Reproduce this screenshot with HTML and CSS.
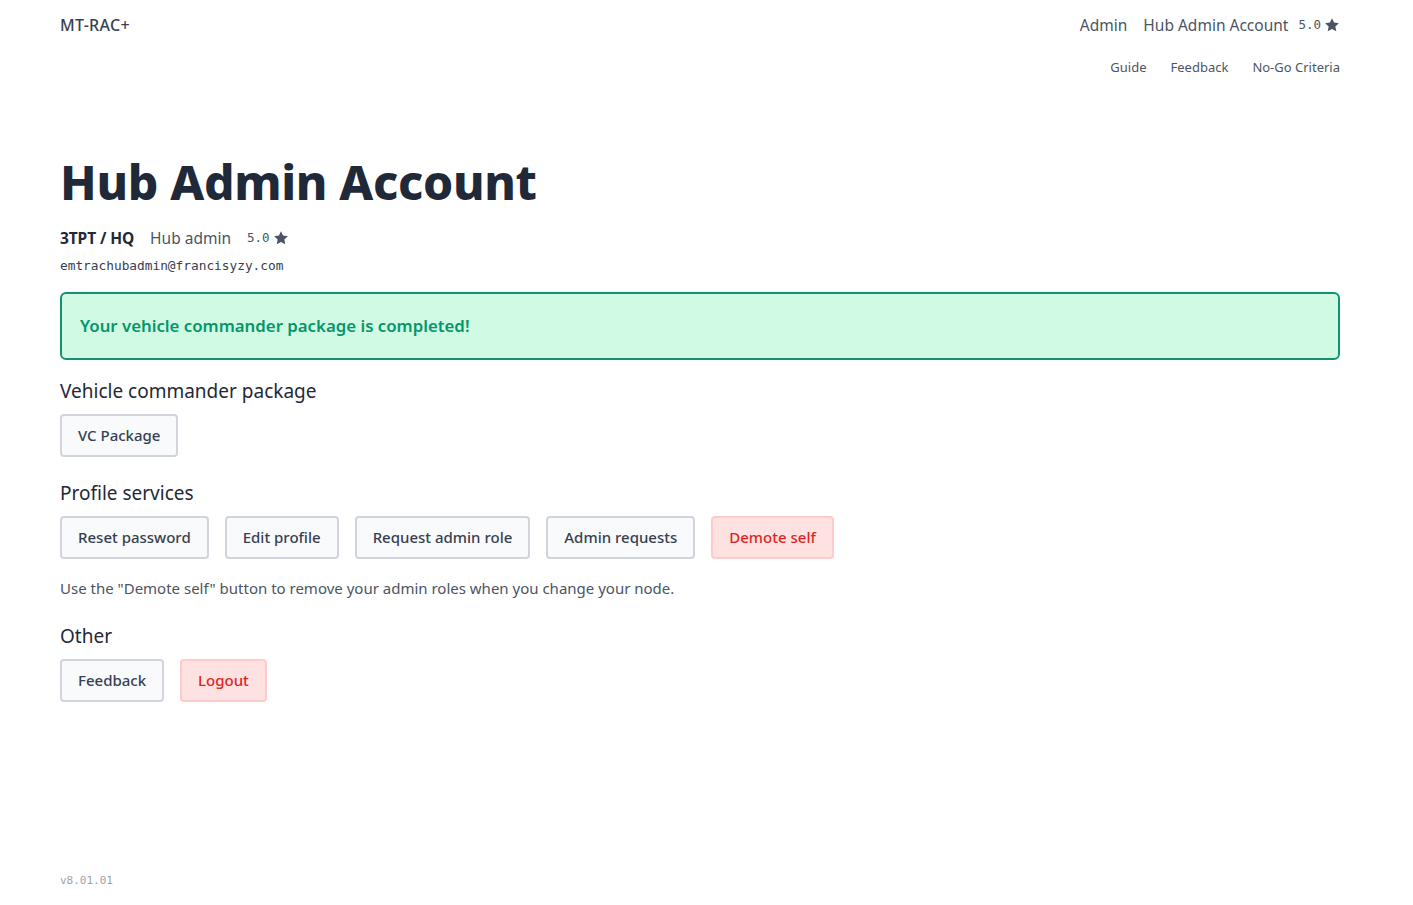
FILE: index.html
```html
<!DOCTYPE html>
<html lang="en">
<head>
<meta charset="utf-8">
<title>Hub Admin Account</title>
<link rel="stylesheet" href="styles.css">
</head>
<body>
<div class="page">
  <header class="topbar">
    <div class="brand">MT-RAC+</div>
    <div class="nav">
      <div class="nav-main">
        <span class="nav-link">Admin</span>
        <span class="nav-link">Hub Admin Account</span>
        <span class="rating"><span class="mono">5.0</span><svg class="star" viewBox="0 0 24 24"><path d="M12 1.8l3.1 6.6 7.2.9-5.3 5 1.4 7.1L12 17.9l-6.4 3.5 1.4-7.1-5.3-5 7.2-.9z"/></svg></span>
      </div>
      <div class="nav-sub">
        <span>Guide</span>
        <span>Feedback</span>
        <span>No-Go Criteria</span>
      </div>
    </div>
  </header>

  <main class="content">
    <h1 class="title">Hub Admin Account</h1>
    <div class="meta">
      <span class="unit">3TPT / HQ</span>
      <span class="role">Hub admin</span>
      <span class="rating"><span class="mono">5.0</span><svg class="star" viewBox="0 0 24 24"><path d="M12 1.8l3.1 6.6 7.2.9-5.3 5 1.4 7.1L12 17.9l-6.4 3.5 1.4-7.1-5.3-5 7.2-.9z"/></svg></span>
    </div>
    <div class="email">emtrachubadmin@francisyzy.com</div>

    <div class="alert">Your vehicle commander package is completed!</div>

    <section class="section first">
      <h2 class="section-title">Vehicle commander package</h2>
      <div class="buttons">
        <button class="btn">VC Package</button>
      </div>
    </section>

    <section class="section">
      <h2 class="section-title">Profile services</h2>
      <div class="buttons">
        <button class="btn">Reset password</button>
        <button class="btn">Edit profile</button>
        <button class="btn">Request admin role</button>
        <button class="btn">Admin requests</button>
        <button class="btn btn-danger">Demote self</button>
      </div>
      <p class="note">Use the "Demote self" button to remove your admin roles when you change your node.</p>
    </section>

    <section class="section">
      <h2 class="section-title">Other</h2>
      <div class="buttons">
        <button class="btn">Feedback</button>
        <button class="btn btn-danger">Logout</button>
      </div>
    </section>
  </main>

  <footer class="footer">v8.01.01</footer>
</div>
</body>
</html>
```

FILE: styles.css
```css
* { box-sizing: border-box; }
html, body { margin: 0; padding: 0; background: #fff; }
body {
  font-family: "Noto Sans", "Open Sans", sans-serif;
  color: #1f2937;
}
.page {
  width: 1280px;
  margin-left: 60px;
  min-height: 905px;
  display: flex;
  flex-direction: column;
}
.topbar {
  display: flex;
  justify-content: space-between;
  align-items: flex-start;
  padding-top: 14px;
}
.brand {
  font-size: 16px;
  font-weight: 500;
  color: #374151;
  line-height: 22px;
  letter-spacing: 0.3px;
}
.nav {
  display: flex;
  flex-direction: column;
  align-items: flex-end;
}
.nav-main {
  display: flex;
  align-items: center;
  gap: 16px;
  font-size: 15.5px;
  color: #4b5563;
  line-height: 22px;
}
.rating {
  display: inline-flex;
  align-items: center;
  gap: 3px;
  color: #4b5563;
}
.mono {
  font-family: "DejaVu Sans Mono", "Liberation Mono", monospace;
  font-size: 12.5px;
}
.star { width: 16px; height: 16px; fill: #4b5563; }
.nav-main .rating { margin-left: -6px; }
.nav-sub {
  display: flex;
  gap: 24px;
  font-size: 13px;
  color: #4b5563;
  margin-top: 22px;
  line-height: 18px;
}
.content { padding-top: 78px; }
.title {
  margin: 0;
  font-size: 48px;
  font-weight: 800;
  line-height: 56px;
  color: #1f2937;
  letter-spacing: -0.3px;
}
.meta {
  display: flex;
  align-items: center;
  gap: 16px;
  margin-top: 17px;
  font-size: 15px;
  line-height: 22px;
}
.unit { font-weight: 700; color: #1f2937; font-size: 15.5px; letter-spacing: -0.1px; }
.role { color: #4b5563; font-size: 15.5px; }
.email {
  font-family: "DejaVu Sans Mono", "Liberation Mono", monospace;
  font-size: 12.8px;
  color: #374151;
  margin-top: 8px;
  line-height: 18px;
}
.alert {
  margin-top: 17px;
  border: 2px solid #10946b;
  background: #d1fae5;
  color: #059669;
  border-radius: 6px;
  padding: 20px 18px;
  font-size: 16.8px;
  font-weight: 600;
  line-height: 24px;
}
.section { margin-top: 22px; }
.section.first { margin-top: 17px; }
.section-title {
  margin: 0 0 9px;
  font-size: 19px;
  font-weight: 400;
  line-height: 28px;
  color: #1f2937;
}
.buttons {
  display: flex;
  gap: 16px;
}
.btn {
  font-family: inherit;
  font-size: 15px;
  font-weight: 500;
  color: #374151;
  background: #f9fafb;
  border: 2px solid #d1d5db;
  border-radius: 4px;
  padding: 0 16px;
  height: 43px;
  line-height: 39px;
}
.btn-danger {
  background: #fee2e2;
  border-color: #fecaca;
  color: #dc2626;
}
.note {
  margin: 17px 0 0;
  font-size: 15px;
  color: #4b5563;
  line-height: 24px;
}
.footer {
  margin-top: auto;
  padding-bottom: 18px;
  font-family: "DejaVu Sans Mono", "Liberation Mono", monospace;
  font-size: 11px;
  color: #9ca3af;
}
```
